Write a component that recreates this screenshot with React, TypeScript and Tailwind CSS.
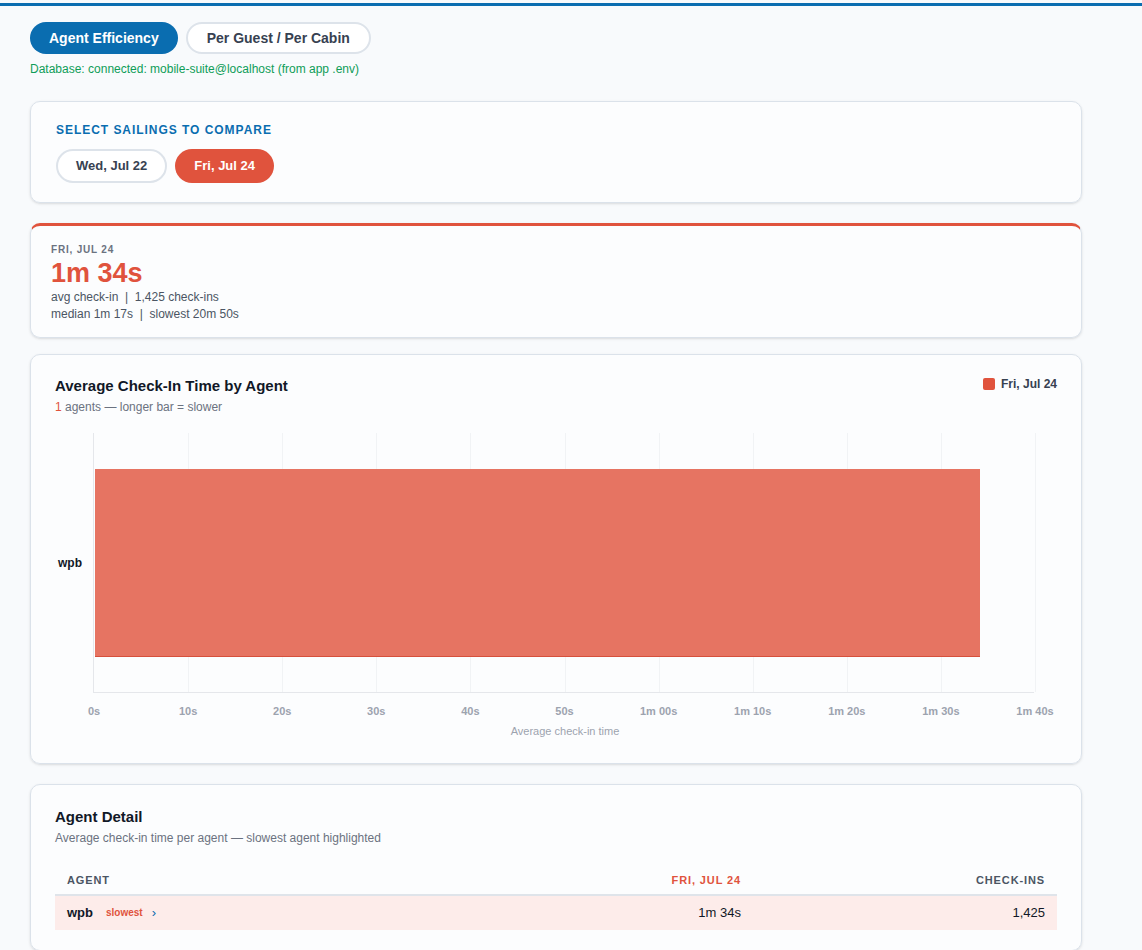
import React from "react";

const ticks = ["0s","10s","20s","30s","40s","50s","1m 00s","1m 10s","1m 20s","1m 30s","1m 40s"];

export default function App() {
  return (
    <div className="min-h-[950px] bg-[#f8fafc] pt-[3px]" style={{ fontFamily: '"Liberation Sans", Arial, sans-serif' }}>
      <div className="h-[3px] bg-[#0a6db0]" />
      <div className="pl-[30px] pr-[60px] pt-[16px]">
        <div className="flex gap-2">
          <button className="h-[32px] px-[19px] rounded-full bg-[#0a6db0] text-white text-[14px] font-bold">Agent Efficiency</button>
          <button className="h-[32px] px-[19px] rounded-full border-2 border-[#dde3ea] bg-white text-[#374151] text-[14px] font-bold">Per Guest / Per Cabin</button>
        </div>
        <div className="mt-[6px] text-[12px] text-[#0f9d58]">Database: connected: mobile-suite@localhost (from app .env)</div>

        <div className="mt-[23px] w-[1052px] rounded-[10px] border border-[#dbe2ea] bg-white/60 shadow-sm px-[25px] pt-[19px] pb-[19px]">
          <div className="text-[12px] font-bold tracking-[0.08em] text-[#0a6db0]">SELECT SAILINGS TO COMPARE</div>
          <div className="mt-[10px] flex gap-2">
            <button className="h-[34px] px-[18px] rounded-full border-2 border-[#dde3ea] bg-white text-[#374151] text-[13px] font-bold">Wed, Jul 22</button>
            <button className="h-[34px] px-[19px] rounded-full bg-[#e0533d] text-white text-[13px] font-bold">Fri, Jul 24</button>
          </div>
        </div>

        <div className="mt-[20px] w-[1052px] rounded-[10px] border border-[#dbe2ea] border-t-[3px] border-t-[#e0533d] bg-white/60 shadow-sm px-[20px] pt-[16px] pb-[14px]">
          <div className="text-[10px] font-bold tracking-[0.08em] text-[#6b7280]">FRI, JUL 24</div>
          <div className="text-[27px] font-bold leading-[32px] text-[#e0533d]">1m 34s</div>
          <div className="text-[12px] text-[#4b5563] leading-[17px]">avg check-in &nbsp;|&nbsp; 1,425 check-ins</div>
          <div className="text-[12px] text-[#4b5563] leading-[17px]">median 1m 17s &nbsp;|&nbsp; slowest 20m 50s</div>
        </div>

        <div className="mt-[16px] w-[1052px] h-[410px] rounded-[10px] border border-[#dbe2ea] bg-white/60 shadow-sm px-[24px] pt-[20px]">
          <div className="flex justify-between">
            <div>
              <div className="text-[15px] font-bold text-[#111827]">Average Check-In Time by Agent</div>
              <div className="text-[12px] text-[#6b7280]"><span className="text-[#e0533d]">1</span> agents — longer bar = slower</div>
            </div>
            <div className="flex items-center gap-[6px] text-[12px] font-bold text-[#374151] h-[16px] mt-[1px]">
              <span className="w-[12px] h-[12px] rounded-[2px] bg-[#e0533d]" />Fri, Jul 24
            </div>
          </div>
          <div className="mt-[17px] flex">
            <div className="w-[38px] h-[260px] flex items-center text-[12px] font-bold text-[#111827] pl-[3px]">wpb</div>
            <div className="relative w-[941px] h-[260px] border-l border-b border-[#e5e7eb]">
              {ticks.map((t, i) => i > 0 && (
                <div key={t} className="absolute top-0 bottom-0 w-px bg-[#f1f3f5]" style={{ left: i * 94.1 }} />
              ))}
              <div className="absolute left-px top-[36px] h-[188px] w-[885px] bg-[#e67462] border-b border-[#d6503c]" />
              {ticks.map((t, i) => (
                <div key={t} className="absolute top-[270px] -translate-x-1/2 text-[11px] font-bold text-[#9ca3af] whitespace-nowrap" style={{ left: i * 94.1 }}>{t}</div>
              ))}
              <div className="absolute top-[290px] left-[471px] -translate-x-1/2 text-[11px] text-[#9ca3af] whitespace-nowrap">Average check-in time</div>
            </div>
          </div>
        </div>

        <div className="mt-[20px] w-[1052px] rounded-[10px] border border-[#dbe2ea] bg-white/60 shadow-sm px-[24px] pt-[21px] pb-[20px]">
          <div className="text-[15px] font-bold text-[#111827]">Agent Detail</div>
          <div className="text-[12px] text-[#6b7280]">Average check-in time per agent — slowest agent highlighted</div>
          <div className="mt-[20px]">
            <div className="flex h-[29px] items-center border-b-2 border-[#dfe4ea] text-[11px] font-bold tracking-[0.08em] px-[12px]">
              <div className="flex-1 text-[#4b5563]">AGENT</div>
              <div className="w-[200px] text-right text-[#e0533d]">FRI, JUL 24</div>
              <div className="w-[304px] text-right text-[#4b5563]">CHECK-INS</div>
            </div>
            <div className="flex h-[34px] items-center bg-[#fdecea] px-[12px] text-[13px] text-[#111827]">
              <div className="flex-1 flex items-center">
                <span className="font-bold">wpb</span>
                <span className="ml-[13px] text-[10px] font-bold text-[#e0533d]">slowest</span>
                <span className="ml-[9px] text-[13px] text-[#0a6db0]">›</span>
              </div>
              <div className="w-[200px] text-right">1m 34s</div>
              <div className="w-[304px] text-right">1,425</div>
            </div>
          </div>
        </div>
      </div>
    </div>
  );
}
